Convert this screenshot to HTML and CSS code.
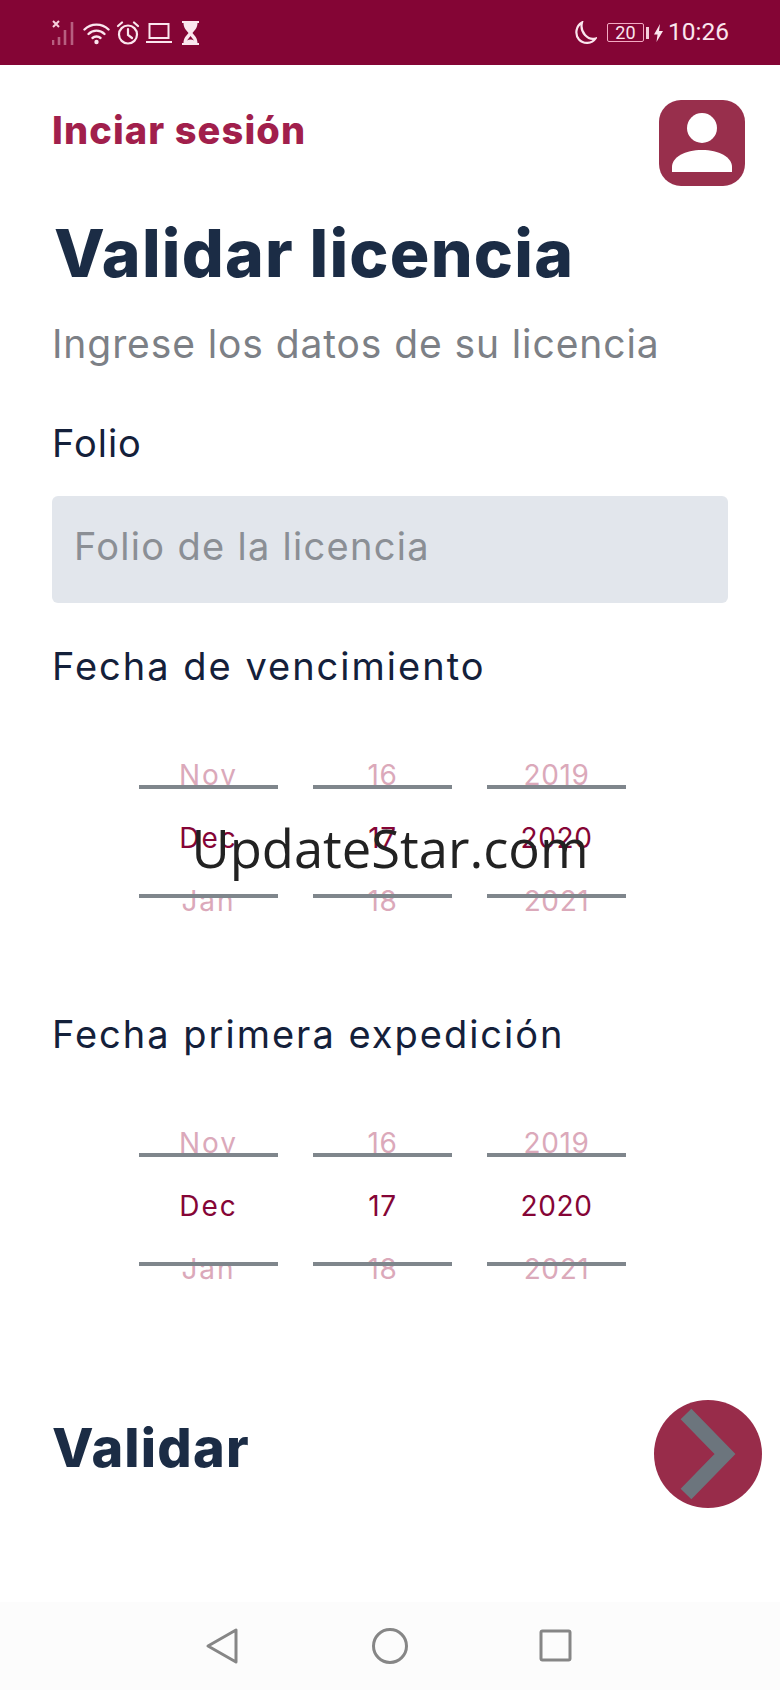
FILE: index.html
```html
<!DOCTYPE html>
<html lang="es">
<head>
<meta charset="utf-8">
<title>Validar licencia</title>
<link rel="stylesheet" href="styles.css">
</head>
<body>
<div class="page">
  <header class="status">
    <div class="status-left">
      <svg class="ico-signal" width="24" height="26" viewBox="0 0 24 26" fill="none" stroke="#f6cfdc">
        <path d="M1 1l6 6M7 1L1 7" stroke-width="2"/>
        <path d="M1 20v5M7 17v8M13 10v15M20 2v23" stroke-width="2.6" opacity=".45"/>
      </svg>
      <svg width="27" height="24" viewBox="0 0 27 24" fill="none" stroke="#fbe6ee" stroke-width="2.4" stroke-linecap="round">
        <path d="M1.5 8.5C8 2 19 2 25.5 8.500"/>
        <path d="M5.500 13C10 8.500 17 8.500 21.500 13"/>
        <path d="M9.500 17c2.200-2 5.800-2 8 0"/>
        <circle cx="13.500" cy="21" r="2.200" fill="#fbe6ee" stroke="none"/>
      </svg>
      <svg width="24" height="24" viewBox="0 0 24 24" fill="none" stroke="#fbe6ee" stroke-width="2.200" stroke-linecap="round">
        <circle cx="12" cy="13.500" r="9"/>
        <path d="M12 8v6l4 3M2 5l4-3.500M22 5l-4-3.500"/>
      </svg>
      <svg width="26" height="22" viewBox="0 0 26 22" fill="none" stroke="#fbe6ee" stroke-width="2">
        <rect x="3.500" y="2" width="19" height="14"/>
        <path d="M0 20h26"/>
      </svg>
      <svg class="ico-glass" width="19" height="24" viewBox="0 0 19 24">
        <path fill="#fbe6ee" fill-rule="evenodd" d="M1 0h17v2h-1.500c0 5-3 7.500-5 10 2 2.500 5 5 5 10H18v2H1v-2h1.500c0-5 3-7.500 5-10-2-2.500-5-5-5-10H1zM9.500 15l-3.500 4.500c2-1.500 5-1.500 7 0z"/>
      </svg>
    </div>
    <div class="status-right">
      <svg width="24" height="24" viewBox="0 0 24 24" fill="none" stroke="#fbe6ee" stroke-width="2.200">
        <path d="M9 1.500C3 5 1.500 13 6 18.500c4.500 5 13 4.500 16.500-1C15 19.500 6.500 11.500 9 1.500z"/>
      </svg>
      <div class="battery"><span class="battery-level">20</span></div>
      <span class="battery-nub"></span>
      <svg class="bolt" width="9" height="18" viewBox="0 0 9 18"><path fill="#fbe6ee" d="M6 0L0 10.500h3.500L2.500 18 9 7H5z"/></svg>
      <span class="clock">10:26</span>
    </div>
  </header>

  <main class="main">
    <div class="top-row">
      <a class="login">Inciar sesión</a>
      <div class="avatar">
        <svg width="60" height="60" viewBox="0 0 60 60" fill="#fff">
          <circle cx="30" cy="15" r="15"/>
          <path d="M0 59v-5C0 44 13 37 30 37s30 7 30 17v5z"/>
        </svg>
      </div>
    </div>

    <h1 class="title">Validar licencia</h1>
    <p class="subtitle">Ingrese los datos de su licencia</p>

    <label class="label label-folio">Folio</label>
    <div class="input">Folio de la licencia</div>

    <label class="label label-venc">Fecha de vencimiento</label>
    <div class="picker picker-first">
      <div class="col month"><span class="opt">Nov</span><span class="opt sel">Dec</span><span class="opt">Jan</span></div>
      <div class="col"><span class="opt">16</span><span class="opt sel">17</span><span class="opt">18</span></div>
      <div class="col"><span class="opt">2019</span><span class="opt sel">2020</span><span class="opt">2021</span></div>
    </div>

    <label class="label label-exp">Fecha primera expedición</label>
    <div class="picker picker-second">
      <div class="col month"><span class="opt">Nov</span><span class="opt sel">Dec</span><span class="opt">Jan</span></div>
      <div class="col"><span class="opt">16</span><span class="opt sel">17</span><span class="opt">18</span></div>
      <div class="col"><span class="opt">2019</span><span class="opt sel">2020</span><span class="opt">2021</span></div>
    </div>

    <div class="submit-row">
      <span class="submit-text">Validar</span>
      <button class="submit-btn" type="button" aria-label="Validar">
        <svg width="108" height="108" viewBox="0 0 108 108" fill="none">
          <path d="M32 14l39 40-39 40" stroke="#6c757d" stroke-width="15"/>
        </svg>
      </button>
    </div>
  </main>

  <nav class="navbar">
    <svg width="40" height="40" viewBox="0 0 40 40" fill="none" stroke="#868686" stroke-width="3" stroke-linejoin="round">
      <path d="M32 4v32L4 20z"/>
    </svg>
    <svg width="40" height="40" viewBox="0 0 40 40" fill="none" stroke="#868686" stroke-width="3">
      <circle cx="20" cy="20" r="16.500"/>
    </svg>
    <svg width="40" height="40" viewBox="0 0 40 40" fill="none" stroke="#868686" stroke-width="3" stroke-linejoin="round">
      <rect x="5" y="5" width="29" height="29" rx="1.500"/>
    </svg>
  </nav>

  <div class="watermark">UpdateStar.com</div>
</div>
</body>
</html>
```

FILE: styles.css
```css
* { box-sizing: border-box; }
html, body { margin: 0; padding: 0; }
body { background: #fff; font-family: Inter, "Noto Sans", sans-serif; }

.page {
  position: relative;
  width: 780px;
  height: 1690px;
  display: flex;
  flex-direction: column;
  overflow: hidden;
}

/* Status bar */
.status {
  flex: none;
  height: 65px;
  background: #840535;
  display: flex;
  justify-content: space-between;
  align-items: center;
  padding: 0 51px 0 52px;
}
.status-left { display: flex; align-items: center; gap: 6px; }
.status-right { display: flex; align-items: center; }
.ico-signal { margin-right: 1px; }
.ico-glass { margin-left: 3px; }
.battery {
  width: 37px;
  height: 19px;
  margin-left: 10px;
  border: 1.500px solid #f3a9c2;
  border-radius: 2px;
  display: flex;
  align-items: center;
  justify-content: center;
}
.battery-level { font: 400 18px/1 Roboto, sans-serif; color: #fbe6ee; }
.battery-nub { width: 3px; height: 12px; margin-left: 2px; background: #f6cfdc; }
.bolt { margin: 0 5px 0 5px; }
.clock { font: 400 24.500px/1 Roboto, sans-serif; color: #fbe6ee; }

/* Main column */
.main { flex: 1; padding: 35px 52px 0; }

.top-row { display: flex; justify-content: space-between; align-items: flex-start; height: 86px; }
.login { font-weight: 800; font-size: 38px; line-height: 60px; color: #a11f4c; letter-spacing: 1.100px; }
.avatar {
  width: 86px;
  height: 86px;
  margin-right: -17px;
  border-radius: 22px;
  background: #982f4c;
  display: flex;
  align-items: center;
  justify-content: center;
}

.title {
  margin: 27px 0 0 2px;
  font-weight: 800;
  font-size: 66px;
  line-height: 80px;
  color: #1b2c45;
  letter-spacing: 1.200px;
}
.subtitle {
  margin: 26px 0 0;
  font-weight: 400;
  font-size: 39px;
  line-height: 50px;
  color: #7c8086;
  letter-spacing: 0.900px;
}

.label {
  display: block;
  font-weight: 400;
  font-size: 38px;
  line-height: 50px;
  color: #14203a;
  letter-spacing: 2px;
}
.label-folio { margin-top: 49px; letter-spacing: 1px; }
.label-venc { margin-top: 38px; }
.label-exp { margin-top: 76px; }

.input {
  margin-top: 28px;
  height: 107px;
  padding: 0 22px 7px;
  border-radius: 6px;
  background: #e2e6ec;
  display: flex;
  align-items: center;
  font-size: 38px;
  letter-spacing: 1.300px;
  color: #8b8f95;
}

/* Date pickers */
.picker {
  display: flex;
  gap: 35px;
  padding-left: 87px;
}
.picker-first { margin-top: 53px; }
.picker-second { margin-top: 53px; }
.col {
  position: relative;
  width: 139px;
  display: flex;
  flex-direction: column;
  align-items: center;
  letter-spacing: 0.600px;
}
.month { letter-spacing: 2px; }
.col::before,
.col::after {
  content: "";
  position: absolute;
  left: 0;
  right: 0;
  height: 4px;
  background: #7f868c;
}
.col::before { top: 41px; }
.col::after { top: 150px; }
.opt {
  height: 63px;
  line-height: 63px;
  font-size: 28px;
  color: #dba9ba;
}
.sel { color: #850536; }

/* Submit */
.submit-row {
  margin-top: 99px;
  display: flex;
  justify-content: space-between;
  align-items: flex-start;
  height: 108px;
}
.submit-text { font-weight: 800; font-size: 54px; letter-spacing: 1.200px; line-height: 96px; color: #1b2c45; }
.submit-btn {
  width: 108px;
  height: 108px;
  margin-right: -34px;
  padding: 0;
  border: 0;
  border-radius: 50%;
  background: #982c4a;
}
.submit-btn svg { display: block; }

/* Navigation bar */
.navbar {
  flex: none;
  height: 88px;
  background: #fcfcfc;
  display: flex;
  justify-content: center;
  align-items: center;
  gap: 126px;
}

/* Watermark lying over the page */
.watermark {
  position: absolute;
  left: 0;
  right: 0;
  top: 813px;
  text-align: center;
  font-family: "Open Sans", sans-serif;
  font-size: 52.500px;
  line-height: 70px;
  color: #222;
}
```
